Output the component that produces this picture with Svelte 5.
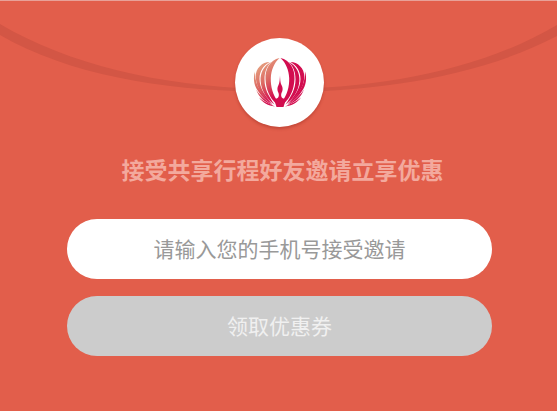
<script>
  let phone = $state('');
</script>

<main>
  <svg class="arc" viewBox="0 0 557 92" preserveAspectRatio="none" aria-hidden="true">
    <path d="M0 24C74 68 176 89 279 89S483 69 557 25V36C483 75 382 92 279 92S74 78 0 35Z" />
  </svg>

  <div class="logo">
    <svg viewBox="0 2 70 62" role="img" aria-label="Logo">
      <defs>
        <linearGradient id="petal" gradientUnits="userSpaceOnUse" x1="12" y1="12" x2="37" y2="40">
          <stop offset="0.1" stop-color="#e5a080" />
          <stop offset="0.55" stop-color="#dc6560" />
          <stop offset="1" stop-color="#d20d4f" />
        </linearGradient>
        <g id="half">
          <path d="M34.5 8C25 10 20 19 20.500 29C21 40 25 48 31 53.500L33 52C28 45 25.500 37 25.800 28C26.200 20 29 13 34.500 8Z" />
          <path d="M26 12C18.500 16 15.200 23 15.600 31C16.500 42 22 49 29.500 54.500C23.500 46 19.500 39 19.500 29.500C19.500 22 21.500 17 26 12Z" />
          <path d="M24.500 12C17.500 12 10.500 18 10.700 27C11.200 39 19 48 28 54.500C20 46 14.500 38 14.500 29C14.500 21 18.500 15.500 24.500 12Z" />
          <path d="M10 21.500C7.800 28 9 36 13 41C16 46 21 51 27 54.500C17.500 45 9.500 36 10 21.500Z" />
          <path d="M11 39.500C14 47.500 20 52.500 28 55.500C20 50 15 45.500 11 39.500Z" />
          <path d="M14 47.500C18 53 23 55.500 30 56.500C23 53.500 18 51 14 47.500Z" />
        </g>
      </defs>
      <use href="#half" fill="url(#petal)" />
      <use href="#half" fill="#d20d4f" transform="matrix(-1 0 0 1 70 0)" />
      <path fill="#d20d4f" d="M35 25.500C35.300 31 35.500 33 36.500 35C38 38 38 40 36.500 43C35.500 46 36.500 49 41 49L38.500 57H31.500L29 49C33.500 49 34.500 46 33.500 43C32 40 32 38 33.500 35C34.500 33 34.700 31 35 25.500Z" />
    </svg>
  </div>

  <h1>接受共享行程好友邀请立享优惠</h1>

  <form onsubmit={(e) => e.preventDefault()}>
    <input type="tel" aria-label="手机号" placeholder="请输入您的手机号接受邀请" bind:value={phone} />
    <button type="submit">领取优惠券</button>
  </form>
</main>

<style>
  :global(body) {
    margin: 0;
    background: #e25e4b;
  }

  main {
    position: relative;
    box-sizing: border-box;
    min-height: 100vh;
    padding: 37px 65px 55px 67px;
    border-top: 1px solid #e8a198;
    background: #e25e4b;
    font-family: "Noto Sans CJK SC", sans-serif;
    display: flex;
    flex-direction: column;
    align-items: center;
  }

  .arc {
    position: absolute;
    top: -1px;
    left: 0;
    width: 100%;
    height: 92px;
    fill: #d35645;
  }

  .logo {
    position: relative;
    display: flex;
    align-items: center;
    justify-content: center;
    width: 89px;
    height: 89px;
    border-radius: 50%;
    background: #fff;
    box-shadow: 0 2px 3px rgba(150, 40, 30, 0.4);
  }

  .logo svg {
    width: 70px;
    height: 62px;
  }

  h1 {
    margin: 25px 0 0;
    padding-left: 6px;
    color: #f3a99d;
    font-size: 23px;
    font-weight: 700;
    line-height: 34px;
    white-space: nowrap;
  }

  form {
    display: flex;
    flex-direction: column;
    gap: 17px;
    width: 100%;
    margin-top: 33px;
  }

  input,
  button {
    box-sizing: border-box;
    width: 100%;
    height: 60px;
    margin: 0;
    padding: 0 28px 2px;
    border: 0;
    border-radius: 30px;
    font-family: inherit;
    font-size: 21px;
    text-align: center;
  }

  input {
    background: #fff;
    color: #555;
  }

  input::placeholder {
    color: #999;
    opacity: 1;
  }

  button {
    background: #ccc;
    color: #f0f0f0;
  }
</style>
